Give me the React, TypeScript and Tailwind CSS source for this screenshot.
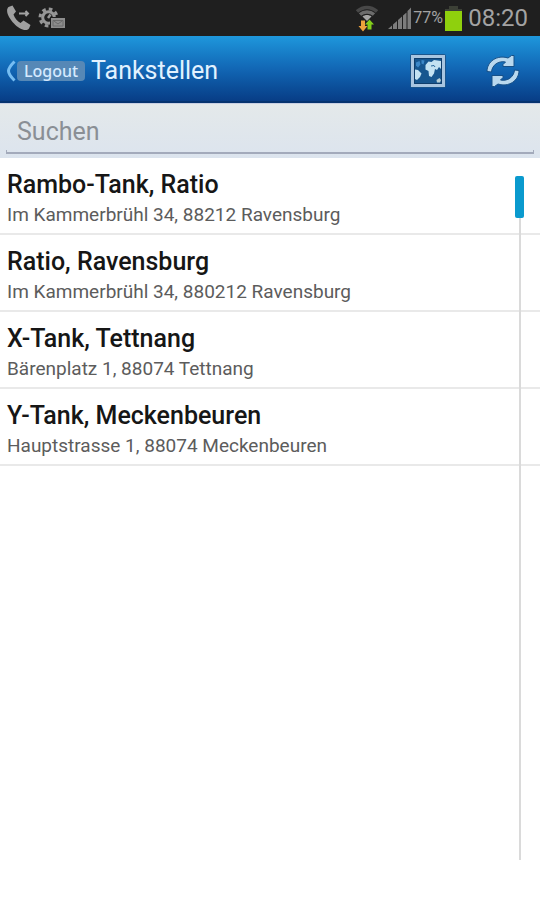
import React, { useState } from "react";

type Station = { name: string; address: string };

const stations: Station[] = [
  { name: "Rambo-Tank, Ratio", address: "Im Kammerbrühl 34, 88212 Ravensburg" },
  { name: "Ratio, Ravensburg", address: "Im Kammerbrühl 34, 880212 Ravensburg" },
  { name: "X-Tank, Tettnang", address: "Bärenplatz 1, 88074 Tettnang" },
  { name: "Y-Tank, Meckenbeuren", address: "Hauptstrasse 1, 88074 Meckenbeuren" },
];

function CallForwardIcon() {
  return (
    <svg width="26" height="26" viewBox="0 0 26 26" fill="none" aria-hidden="true">
      <path
        d="M2.500 2 6.500 0.500 10 6.500 7.500 9.500C8.500 13 11.500 16.500 14.500 18L17.500 15.500 24.500 20 23 23.500C20 27 13 24 8 18.500 2.500 12.500-1 5.500 2.500 2Z"
        fill="#a0a0a0"
      />
      <path d="M13 8.500h9M19.500 6l2.500 2.500-2.500 2.500" stroke="#a2a2a2" strokeWidth="2" />
    </svg>
  );
}

function GearIcon() {
  return (
    <svg width="28" height="22" viewBox="0 0 28 22" fill="none" aria-hidden="true">
      <circle cx="10.500" cy="10.500" r="8.500" stroke="#969696" strokeWidth="3" strokeDasharray="3.600 3.080" />
      <circle cx="10.500" cy="10.500" r="5.800" stroke="#969696" strokeWidth="3" />
      <path d="M10 11 12.500 7.500" stroke="#969696" strokeWidth="2.500" />
      <rect x="12.500" y="10.500" width="15" height="11" fill="#8d8d8d" stroke="#1f1f1f" />
      <path d="M15 13.500h10v5.500H15ZM16 14l4 3 4-3" stroke="#6a6a6a" />
    </svg>
  );
}

function WifiIcon() {
  return (
    <svg width="22" height="28" viewBox="0 0 22 28" fill="none" aria-hidden="true">
      <path d="M1 7.500C7 2 15 2 21 7.500" stroke="#484848" strokeWidth="3.500" />
      <path d="M4 10.500C8 7 14 7 18 10.500" stroke="#6c6c6c" strokeWidth="3.500" />
      <path d="M6.500 12.500c2.500-2 6.500-2 9 0L11 17Z" fill="#a5a5a5" />
      <path d="M5 16.500h4v5.500h2.500L7 27.500 2.500 22H5Z" fill="#eda33c" />
      <path d="M11.500 25.500h4v-5H18L13.500 15.500 9 20.500h2.500Z" fill="#83cf1b" />
    </svg>
  );
}

function SignalIcon() {
  return (
    <svg width="24" height="24" viewBox="0 0 24 24" aria-hidden="true">
      <path d="M0 23l4-3.500V23ZM5 18.500l4-3.500v8H5ZM10 14 14 10.500V23h-4ZM15 9.500 18.500 6.500V23H15ZM19.500 5 23 1.500V23h-3.500Z" fill="#7d7d7d" />
    </svg>
  );
}

function BatteryIcon() {
  return (
    <svg width="17" height="26" viewBox="0 0 17 26" aria-hidden="true">
      <path d="M4 1h9v3h4v3H0V4h4Z" fill="#3c4036" />
      <rect y="6" width="17" height="20" fill="#8fd00d" />
    </svg>
  );
}

function MapIcon() {
  return (
    <svg width="36" height="34" viewBox="0 0 36 34" fill="none" aria-hidden="true">
      <rect x=".5" y=".5" width="35" height="33" rx="1" stroke="#1c568c" />
      <rect x="2.500" y="2.500" width="31" height="29" fill="#17568f" stroke="#a9c5e0" strokeWidth="3" />
      <path d="M4.500 4.500h27v25h-27Z" stroke="#103e6c" />
      <path d="M6 8.500 9.500 7l1 3.500L8 13.500l-2-2Z" fill="#3d88c8" />
      <path d="M11.500 6l3 .500-1 4-2-1Z" fill="#3d88c8" />
      <path d="M5 15.500l3 .500 3.500 3.500L10 23l-3 3-2-1Z" fill="#c4e2f2" />
      <path d="M15.500 11l3-3.500 3 .500L24 6l7 1v8l-2-2-2 3-2-1-1 4.500-2.500 3.500-2.500-1-.500-5-3-1.500Z" fill="#c4e2f2" />
      <path d="M21 12l3-.500 1 1.500" stroke="#28689c" />
      <path d="M26.500 26l3-2 1.500 2-1 2.500h-3Z" fill="#b9cfd6" />
    </svg>
  );
}

function RefreshIcon() {
  return (
    <svg width="34" height="34" viewBox="0 0 34 34" fill="#b9d8ee" stroke="#175087" strokeLinejoin="round" aria-hidden="true">
      <path d="M1 17.500C1 7.500 11 .500 22 4L25.500 1.500H28V12.500H17V10.500L19.500 8C12.500 6.500 6 11 5.500 18Z" />
      <path d="M33 16.500C33 26.500 23 33.500 12 30L8.500 32.500H6V21.500H17V23.500L14.500 26C21.500 27.500 28 23 28.500 16Z" />
    </svg>
  );
}

function StatusBar() {
  return (
    <div className="flex h-9 items-center bg-[#1f1f1f] pr-3 pl-1.5 text-[#a3a3a3]">
      <CallForwardIcon />
      <div className="ml-1.5">
        <GearIcon />
      </div>
      <div className="ml-auto flex items-center">
        <WifiIcon />
        <div className="ml-2.5">
          <SignalIcon />
        </div>
        <span className="ml-px w-8 text-base leading-6">77%</span>
        <BatteryIcon />
        <span className="ml-1.5 text-2xl leading-8">08:20</span>
      </div>
    </div>
  );
}

export default function App() {
  const [query, setQuery] = useState("");
  const shown = stations.filter((s) => (s.name + s.address).toLowerCase().includes(query.toLowerCase()));

  return (
    <div className="flex min-h-screen flex-col bg-white font-['Roboto',sans-serif]">
      <StatusBar />
      <header className="flex h-[67px] items-center border-b-2 border-[#06336f] bg-linear-to-b from-[#1f97dc] via-[#1267b5] to-[#083d86] pt-1 pr-5 pl-1.5">
        <button type="button" className="flex items-center">
          <svg width="11" height="22" viewBox="0 0 11 22" fill="none" aria-hidden="true">
            <path d="M8.500 1.500C6 4 2.500 8.500 2.500 11s3.500 7 6 9.500" stroke="#76bdf2" strokeWidth="3" />
          </svg>
          <span className="flex h-5 w-[68px] items-center justify-center rounded-sm bg-[#5688b6] font-['Noto_Sans',sans-serif] text-base font-medium text-[#d5eaff]">
            Logout
          </span>
        </button>
        <h1 className="ml-1.5 text-[25px] leading-8 text-[#e2f2ff]">Tankstellen</h1>
        <div className="ml-auto flex items-center gap-10">
          <button type="button" aria-label="Karte">
            <MapIcon />
          </button>
          <button type="button" aria-label="Aktualisieren">
            <RefreshIcon />
          </button>
        </div>
      </header>

      <div className="flex h-[55px] flex-col border-t border-[#c8cfe2] bg-linear-to-b from-[#e4e9ea] to-[#dce4ee] px-1.5 pb-1">
        <input
          type="text"
          aria-label="Suchen"
          placeholder="Suchen"
          value={query}
          onChange={(e) => setQuery(e.target.value)}
          className="min-h-0 w-full flex-1 bg-transparent px-[11px] pt-2.5 text-[25px] leading-8 text-[#333] outline-none placeholder:text-[#8a8f95]"
        />
        <div className="h-1 border-x border-b-2 border-[#a3aabb]" />
      </div>

      <main className="relative flex-1">
        <ul>
          {shown.map((s) => (
            <li key={s.name} className="h-[77px] border-b-2 border-[#e9e9e9] px-[7px] pt-3">
              <h2 className="text-[25px] leading-[30px] font-medium text-[#161616]">{s.name}</h2>
              <p className="text-[19px] leading-[30px] text-[#5c5c5c]">{s.address}</p>
            </li>
          ))}
        </ul>
        <div className="absolute top-[18px] right-4 bottom-10 flex w-[9px] flex-col items-center">
          <div className="h-[42px] w-full rounded-xs bg-[#0a9ace]" />
          <div className="w-0.5 flex-1 bg-[#dadada]" />
        </div>
      </main>
    </div>
  );
}
